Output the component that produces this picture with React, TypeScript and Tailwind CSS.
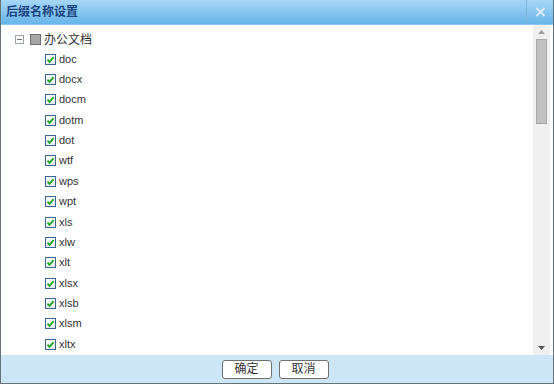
import { Minus } from 'lucide-react';

const items = ['doc', 'docx', 'docm', 'dotm', 'dot', 'wtf', 'wps', 'wpt', 'xls', 'xlw', 'xlt', 'xlsx', 'xlsb', 'xlsm', 'xltx'];

function CheckBox() {
  return (
    <span className="w-[11px] h-[11px] border border-[#3a6690] bg-gradient-to-b from-white to-[#e8eef4] flex items-center justify-center shrink-0">
      <svg width="9" height="9" viewBox="0 0 9 9">
        <path d="M1.5 4.6 L3.5 6.8 L7.6 2.2" stroke="#1ea51e" strokeWidth="1.8" fill="none" />
      </svg>
    </span>
  );
}

export default function App() {
  return (
    <div className="w-[554px] h-[384px] flex flex-col border border-t-0 border-[#64727a] bg-white overflow-hidden" style={{ fontFamily: '"Liberation Sans", "Noto Sans CJK SC", sans-serif' }}>
      {/* Title bar */}
      <div className="h-[25px] flex items-stretch bg-gradient-to-b from-[#a6d6f6] to-[#68b5e9] border-b border-[#8ec7ee] shrink-0">
        <div className="flex-1 flex items-center pl-[5px] text-[12px] font-bold text-[#1a4480]">后缀名称设置</div>
        <div className="w-[27px] border-l border-[#7fb6db] flex items-center justify-center">
          <svg width="11" height="10" viewBox="0 0 11 10">
            <path d="M1.5 1 L9.5 9 M9.5 1 L1.5 9" stroke="#dcedf9" strokeWidth="1.8" />
          </svg>
        </div>
      </div>

      {/* Body */}
      <div className="flex-1 flex min-h-0">
        <div className="flex-1 pt-[5px] pl-[14px] text-[11px] text-[#333]">
          <div className="h-[19px] flex items-center gap-[5px]">
            <span className="w-[9px] h-[9px] border border-[#9aa4ab] bg-white flex items-center justify-center">
              <Minus size={7} strokeWidth={3} color="#555" />
            </span>
            <span className="w-[11px] h-[11px] border border-[#6f6f6f] bg-[#a6a6a6] ml-[1px]" />
            <span className="-ml-[2px] text-[12px]">办公文档</span>
          </div>
          {items.map((it) => (
            <div key={it} className="h-[20.36px] flex items-center gap-[3px] pl-[30px]">
              <CheckBox />
              <span className="leading-none">{it}</span>
            </div>
          ))}
        </div>
        {/* Scrollbar */}
        <div className="w-[17px] mr-[3px] bg-[#f0f0f0] flex flex-col items-center">
          <div className="h-[14px] flex items-center justify-center">
            <svg width="7" height="4" viewBox="0 0 7 4"><path d="M0 4 L3.5 0 L7 4 Z" fill="#a0a0a0" /></svg>
          </div>
          <div className="w-[11px] h-[85px] bg-[#c1c1c1] border border-[#a8a8a8]" />
          <div className="flex-1" />
          <div className="h-[14px] flex items-center justify-center">
            <svg width="7" height="4" viewBox="0 0 7 4"><path d="M0 0 L7 0 L3.5 4 Z" fill="#555" /></svg>
          </div>
        </div>
      </div>

      {/* Footer */}
      <div className="h-[28px] bg-[#cde6f7] flex items-center justify-center gap-[7px] pr-[4px] shrink-0">
        <button className="w-[50px] h-[19px] bg-white border border-[#707070] rounded-[3px] text-[12px] text-[#333] leading-none">确定</button>
        <button className="w-[50px] h-[19px] bg-white border border-[#707070] rounded-[3px] text-[12px] text-[#333] leading-none">取消</button>
      </div>
    </div>
  );
}
